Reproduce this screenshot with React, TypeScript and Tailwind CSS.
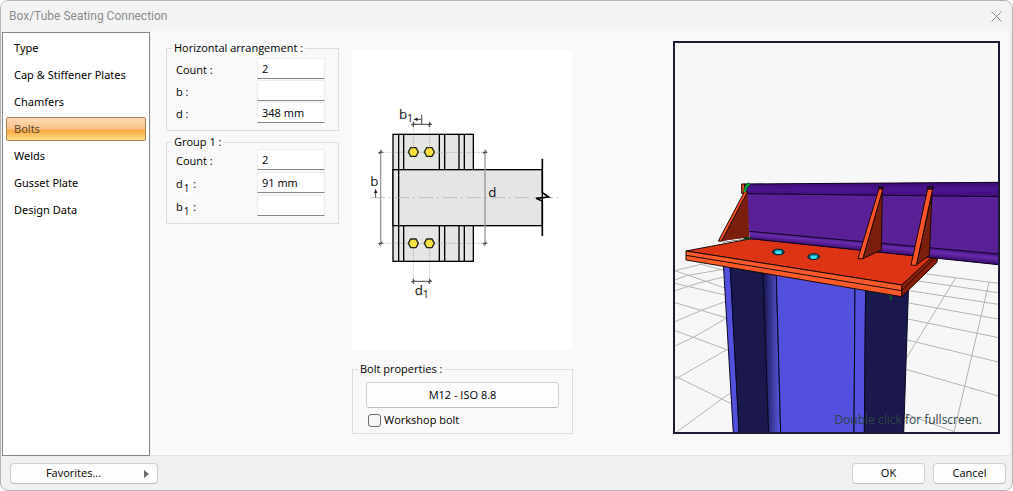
import { useState, type ReactNode } from 'react';
import { clsx } from 'clsx';

const sections = ['Type', 'Cap & Stiffener Plates', 'Chamfers', 'Bolts', 'Welds', 'Gusset Plate', 'Design Data'];

const pushButton =
  'rounded border border-[#d0d0d0] border-b-[#bcbcbc] bg-[#fdfdfd] text-center hover:bg-[#e8f1fa]';

function Group({ title, className, children }: { title: string; className?: string; children: ReactNode }) {
  return (
    <fieldset className={clsx('min-w-0 border border-[#dcdcdc] px-[5px]', className)}>
      <legend className="px-[2px] leading-[14px]">{title}</legend>
      {children}
    </fieldset>
  );
}

function Field({ id, label, sub, value }: { id: string; label: string; sub?: string; value?: string }) {
  return (
    <div className="flex items-center justify-between pr-2 pl-1">
      <label htmlFor={id} className="pt-[2px] leading-4">
        {label}
        {sub && <sub className="bottom-[-4px] bg-white px-px text-[10px]">{sub}</sub>} :
      </label>
      <input
        id={id}
        type="text"
        defaultValue={value}
        className="h-[21px] w-[68px] border border-[#ececec] border-b-[#868686] bg-white px-1 pb-px outline-none"
      />
    </div>
  );
}

// Plan view of the bolt groups, three units to the pixel
function BoltDiagram() {
  const hex = (x: number, y: number) =>
    `${x - 15},${y} ${x - 8},${y - 13} ${x + 8},${y - 13} ${x + 15},${y} ${x + 8},${y + 13} ${x - 8},${y + 13}`;
  return (
    <svg viewBox="6 -120 660 900" className="h-[300px] w-[220px] bg-white" aria-label="Bolt layout">
      <g fill="#e5e5e4" stroke="#000" strokeWidth="4">
        <rect x="129" y="133" width="241" height="381" />
        {[146, 161, 268, 284, 327, 343].map((x) => (
          <path key={x} d={`M${x} 133V514`} />
        ))}
        <rect x="129" y="239" width="448" height="168" />
        <path d="M146 239V407" />
      </g>
      <path d="M63 323H630" stroke="#aaa" strokeWidth="2" strokeDasharray="42 12 6 12" />
      <path d="M577 206V308L596 321L558 325L577 333V438" fill="none" stroke="#000" strokeWidth="5" />
      <g stroke="#888" strokeWidth="2" strokeDasharray="3 4">
        <path d="M85 187H413M85 460H413M190 102V187M239 102V187M190 460V580M239 460V580" />
      </g>
      <g stroke="#999" strokeWidth="4">
        <path d="M92 178V469M405 178V469" />
      </g>
      <g stroke="#444" strokeWidth="3" fill="none">
        <path d="M184 103H246M184 574H246M215 74V103M213 88H196M77 323V302" />
        <path d="M190 95V111M239 95V111M190 566V582M239 566V582" />
        <path d="M186 107L194 99M235 107L243 99M186 578L194 570M235 578L243 570" />
        <path d="M85 187H99M398 187H412M85 460H99M398 460H412" />
        <path d="M87 192L97 182M400 192L410 182M87 465L97 455M400 465L410 455" />
      </g>
      <path d="M190 88L203 83V93ZM77 296L72 309H82Z" fill="#222" />
      <g fill="#fce240" stroke="#222" strokeWidth="4">
        <polygon points={hex(190, 186)} />
        <polygon points={hex(238, 186)} />
        <polygon points={hex(190, 460)} />
        <polygon points={hex(238, 460)} />
      </g>
      <g fontFamily="'Open Sans', sans-serif" fontSize="40" fill="#111">
        <text x="147" y="88">b</text>
        <text x="171" y="97" fontSize="32">1</text>
        <text x="61" y="287">b</text>
        <text x="415" y="321">d</text>
        <text x="194" y="616">d</text>
        <text x="218" y="624" fontSize="32">1</text>
      </g>
    </svg>
  );
}

// 3D model of the seated beam on the column head
function ModelView() {
  return (
    <svg viewBox="15 -381 969 1167" className="block h-auto w-full" aria-label="3D preview">
      <defs>
        <linearGradient id="fillet" x1="0" x2="1">
          <stop offset="0.1" stopColor="#1c1a55" />
          <stop offset="1" stopColor="#5c5ae6" />
        </linearGradient>
        <linearGradient id="topBand" x1="0" x2="0" y1="0" y2="1">
          <stop offset="0" stopColor="#3a0b70" />
          <stop offset="0.5" stopColor="#4d1490" />
          <stop offset="1" stopColor="#3f0c78" />
        </linearGradient>
        <linearGradient id="lowBand" gradientUnits="userSpaceOnUse" x1="600" y1="216" x2="597" y2="246">
          <stop offset="0" stopColor="#4a1488" />
          <stop offset="0.35" stopColor="#6a2cae" />
          <stop offset="1" stopColor="#360a68" />
        </linearGradient>
      </defs>
      <rect x="15" y="-381" width="969" height="1167" fill="#f7f7f7" />
      <g stroke="#b0b5b0" strokeWidth="3" fill="none">
        <path d="M15 302L97 282M15 330L50 317L165 297M15 362L80 341L165 320M15 455L97 420L168 394M15 528L70 502L172 443M15 628L172 538M20 786L155 687L182 668" />
        <path d="M90 282L165 302M15 302L165 354M15 340L165 375M15 398L168 443M15 482L70 502L176 541M15 618L155 687L184 701" />
        <path d="M770 312L985 340M738 332L985 368M718 362L985 403M716 399L985 447M714 447L985 503M712 510L985 576M708 598L985 678M704 731L855 786" />
        <path d="M858 322L708 566M957 337L852 786" />
      </g>

      {/* Column */}
      <g stroke="#080820" strokeWidth="3">
        <polygon points="160,280 180,280 208,790 190,790" fill="#5250dc" />
        <polygon points="180,280 278,280 296,790 207,790" fill="#1a184c" />
        <polygon points="278,280 318,280 332,790 296,790" fill="url(#fillet)" />
        <polygon points="318,280 555,340 552,790 332,790" fill="#5250dc" />
        <polygon points="555,340 587,340 583,790 552,790" fill="#5250dc" />
        <polygon points="587,340 716,340 701,790 583,790" fill="#1a184c" />
      </g>
      <path d="M662 374V390" stroke="#0a5a26" strokeWidth="6" />

      {/* Cap and seating plates */}
      <g stroke="#1c0804" strokeWidth="3" strokeLinejoin="round">
        <polygon points="695,345 775,262 803,266 800,278 695,380" fill="#8a1f0c" />
        <path d="M695 362L792 266" />
        <polygon points="48,243 245,206 785,262 695,345" fill="#dc3414" />
        <polygon points="48,243 695,345 695,380 48,270" fill="#ff5a2a" />
        <path d="M48 256L695 362" />
      </g>

      {/* Beam */}
      <polygon points="222,42 985,37 985,284 240,206" fill="#5a2096" />
      <polygon points="222,42 985,37 985,80 228,71" fill="url(#topBand)" />
      <polygon points="238,184 985,252 985,284 240,206" fill="url(#lowBand)" />
      <path d="M222 42L985 37M228 71L985 80M238 184L985 252M240 206L985 284" stroke="#12031f" strokeWidth="3" fill="none" />

      {/* Gusset plates */}
      <g stroke="#1c0804" strokeWidth="3" strokeLinejoin="round">
        <path d="M158 214L236 203" stroke="#111" strokeWidth="7" />
        <path d="M160 214L228 204" stroke="#fff" strokeWidth="4" />
        <polygon points="215,42 224,42 224,70 215,70" fill="#f04c22" />
        <polygon points="232,62 238,202 154,213" fill="#7a1e0e" stroke="none" />
        <polygon points="224,64 233,64 154,214 145,213" fill="#ff5428" />
        <polygon points="637,60 634,240 578,266" fill="#7a1e0e" />
        <polygon points="627,56 639,56 578,267 564,265" fill="#ff5428" />
        <polygon points="626,50 641,50 639,57 627,57" fill="#321048" />
        <polygon points="786,72 778,256 739,285" fill="#7a1e0e" />
        <polygon points="773,57 788,57 739,286 723,285" fill="#ff5428" />
        <polygon points="773,50 790,50 788,57 774,57" fill="#321048" />
      </g>
      <path d="M224 66Q226 48 239 41" stroke="#052" strokeWidth="9" fill="none" />
      <path d="M224 66Q226 48 239 41" stroke="#14c83c" strokeWidth="4" fill="none" />
      <path d="M220 205H242" stroke="#0b3a1a" strokeWidth="7" />

      {/* Bolt heads */}
      {[{ x: 325, y: 246 }, { x: 431, y: 260 }].map((b) => (
        <g key={b.x} transform={`translate(${b.x} ${b.y})`} stroke="#06202a" strokeWidth="3">
          <ellipse rx="18" ry="8" fill="#16788e" />
          <path d="M-14 -4L-6 -8H8L14 -4V3L7 8H-7L-14 3Z" fill="#1f9ab5" />
          <path d="M-8 -2H8V6H-8Z" fill="#40e0f4" stroke="none" />
        </g>
      ))}
    </svg>
  );
}

export default function App() {
  const [active, setActive] = useState('Bolts');

  return (
    <div className="flex min-h-screen flex-col overflow-hidden rounded-lg border border-[#b4b4b4] bg-[#f0f0f0] font-['Open_Sans',sans-serif] text-[11px] text-black">
      <header className="flex h-[30px] items-center justify-between bg-[#f3f3f3] pr-[10px] pl-2">
        <h1 className="font-[Roboto,sans-serif] text-xs text-[#8c8c8c]">Box/Tube Seating Connection</h1>
        <button type="button" aria-label="Close" className="text-[#8c8c8c]">
          <svg viewBox="0 0 11 11" className="size-[11px]" stroke="currentColor">
            <path d="M0.5 0.5L10.5 10.5M10.5 0.5L0.5 10.5" />
          </svg>
        </button>
      </header>

      <div className="flex flex-1">
        <nav className="mt-px ml-px flex w-[148px] shrink-0 flex-col gap-[3px] border border-[#828790] bg-white px-[3px] pt-[3px] font-['Noto_Sans',sans-serif]">
          {sections.map((name) => (
            <button
              key={name}
              type="button"
              onClick={() => setActive(name)}
              className={clsx(
                'h-6 rounded-[2px] border px-[7px] text-left',
                name === active
                  ? 'border-[#a8824e] bg-[linear-gradient(#fddcba,#f9bf83_50%,#f8a63c_56%,#fde38c)] text-[#5a4a3c]'
                  : 'border-transparent',
              )}
            >
              {name}
            </button>
          ))}
        </nav>

        <main className="mr-px ml-px flex flex-1 items-start gap-[13px] border-r border-b border-[#e4e4e4] bg-[#f9f9f9] pr-[10px] pb-5 pl-[15px]">
          <div className="flex w-[173px] flex-col gap-1 pt-[10px]">
            <Group title="Horizontal arrangement :" className="pb-[7px]">
              <div className="flex flex-col gap-px pt-[3px]">
                <Field id="h-count" label="Count" value="2" />
                <Field id="h-b" label="b" />
                <Field id="h-d" label="d" value="348 mm" />
              </div>
            </Group>
            <Group title="Group 1 :" className="pb-[7px]">
              <div className="flex flex-col gap-[2px]">
                <Field id="g-count" label="Count" value="2" />
                <Field id="g-d1" label="d" sub="1" value="91 mm" />
                <Field id="g-b1" label="b" sub="1" />
              </div>
            </Group>
          </div>

          <div className="flex w-[221px] flex-col gap-3 pt-[19px]">
            <BoltDiagram />
            <Group title="Bolt properties :" className="pb-[5px]">
              <div className="flex flex-col gap-1 px-2 pt-[6px]">
                <button type="button" className={clsx(pushButton, 'h-[26px]')}>
                  M12 - ISO 8.8
                </button>
                <label className="flex h-4 items-center gap-[3px] pl-[2px]">
                  <input
                    type="checkbox"
                    className="size-[13px] appearance-none rounded-[3px] border border-[#6a6a6a] bg-[#f6f6f6] checked:bg-[#0067c0]"
                  />
                  Workshop bolt
                </label>
              </div>
            </Group>
          </div>

          <div className="relative mt-[10px] ml-auto w-[327px] border-2 border-[#1a1a33]">
            <ModelView />
            <span className="absolute right-4 bottom-1 text-xs text-[#2c4444]">Double click for fullscreen.</span>
          </div>
        </main>
      </div>

      <footer className="flex items-center gap-2 pt-[7px] pr-[6px] pb-[6px] pl-[9px]">
        <button type="button" className={clsx(pushButton, 'flex h-[21px] w-[148px] items-center pr-2')}>
          <span className="flex-1 pr-2">Favorites...</span>
          <svg viewBox="0 0 5 8" className="h-2 w-[5px]" fill="#6a6a6a">
            <path d="M0 0L5 4L0 8Z" />
          </svg>
        </button>
        <button type="button" className={clsx(pushButton, 'ml-auto h-[21px] w-[73px]')}>
          OK
        </button>
        <button type="button" className={clsx(pushButton, 'h-[21px] w-[73px]')}>
          Cancel
        </button>
      </footer>
    </div>
  );
}
